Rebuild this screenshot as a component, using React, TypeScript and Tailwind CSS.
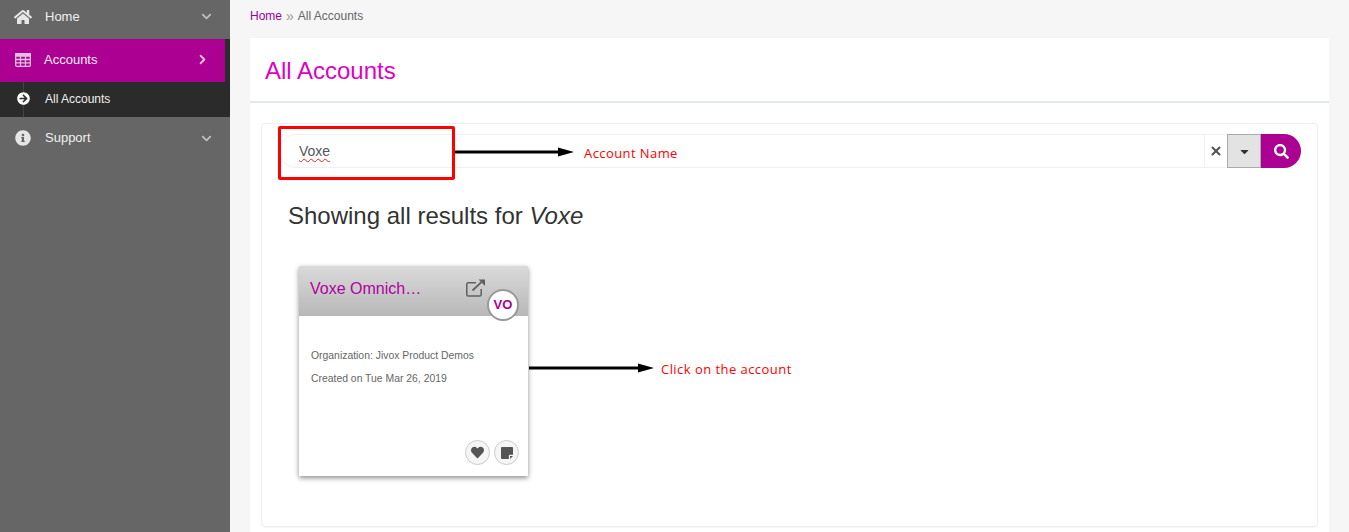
import React from 'react';
import { ChevronDown, ChevronRight, X } from 'lucide-react';
import { FaHome, FaInfoCircle, FaArrowCircleRight, FaSearch, FaHeart, FaCaretDown } from 'react-icons/fa';

const Arrow = ({ width }: { width: number }) => (
  <svg width={width} height="10" viewBox={`0 0 ${width} 10`} className="block">
    <rect x="0" y="3.5" width={width - 10} height="3" fill="#000" />
    <path d={`M${width - 16} 0.5 L${width} 5 L${width - 16} 9.5 Z`} fill="#000" />
  </svg>
);

const TableIcon = () => (
  <svg width="16" height="14" viewBox="0 0 16 14" fill="none" stroke="#e0c0dc" strokeWidth="1.3">
    <rect x="0.7" y="0.7" width="14.6" height="12.6" rx="1" />
    <rect x="0.7" y="0.7" width="14.6" height="2.4" fill="#e0c0dc" />
    <path d="M0.7 6.5H15.3M0.7 9.9H15.3M5.5 3V13.3M10.5 3V13.3" />
  </svg>
);

const ExternalIcon = () => (
  <svg width="20" height="18" viewBox="0 0 20 18" fill="none" stroke="#606060" strokeWidth="1.5" className="absolute left-[167px] top-[13px]">
    <path d="M15.2 10V15.5C15.2 16.3 14.6 17 13.8 17H2.2C1.4 17 0.8 16.3 0.8 15.5V5.2C0.8 4.4 1.4 3.8 2.2 3.8H10" />
    <path d="M6.5 11.5L17 1.6" strokeWidth="1.8" />
    <path d="M12.6 0.6H19V7Z" fill="#606060" stroke="none" />
  </svg>
);

const NoteIcon = () => (
  <svg width="12" height="12" viewBox="0 0 13 13">
    <path d="M1 0H12A1 1 0 0 1 13 1V8.5H9.5A1 1 0 0 0 8.5 9.5V13H1A1 1 0 0 1 0 12V1A1 1 0 0 1 1 0Z" fill="#555555" />
    <path d="M9.8 13V9.8H13Z" fill="#555555" />
  </svg>
);

const SideRow = ({ icon, label, className }: { icon: React.ReactNode; label: string; className: string }) => (
  <div className={`flex items-center text-[13px] text-[#f0f0f0] ${className}`}>
    <span className="flex w-[45px] justify-center pl-[1px] text-[#e6e6e6]">{icon}</span>
    <span className="flex-1 font-medium">{label}</span>
    <ChevronDown size={15} strokeWidth={3} className="mr-[16px] text-[#bdbdbd]" />
  </div>
);

export default function App() {
  return (
    <div className="relative flex h-[532px] w-[1349px] overflow-hidden bg-[#f6f6f6] font-['Liberation_Sans',Arial,sans-serif]">
      {/* Sidebar */}
      <aside className="h-full w-[230px] shrink-0 bg-[#666666]">
        <SideRow icon={<FaHome size={18} />} label="Home" className="h-[39px] pb-[6px]" />
        <div className="bg-[#2b2b2b] pr-[5px]">
          <div className="flex h-[43px] items-center bg-[#ab0091] pb-[2px] text-[13px] text-[#f0f0f0]">
            <span className="flex w-[44px] justify-center pl-[1px]"><TableIcon /></span>
            <span className="flex-1 font-medium">Accounts</span>
            <ChevronRight size={15} strokeWidth={3} className="mr-[15px] text-[#e0c0dc]" />
          </div>
        </div>
        <div className="relative flex h-[35px] items-center bg-[#2b2b2b] pb-[2px] text-[12px] text-[#f0f0f0]">
          <span className="absolute left-[23px] top-0 h-full w-px bg-[#444444]" />
          <span className="relative flex w-[45px] justify-center pl-[2px]">
            <span className="rounded-full bg-[#2b2b2b]"><FaArrowCircleRight size={13} className="text-white" /></span>
          </span>
          <span className="font-medium">All Accounts</span>
        </div>
        <SideRow icon={<FaInfoCircle size={16} />} label="Support" className="h-[40px] pt-[2px]" />
      </aside>

      {/* Main */}
      <main className="flex-1 pl-[20px] pr-[20px]">
        <nav className="flex h-[38px] items-center pb-[6px] text-[12px] text-[#666666]">
          <span className="text-[#990099]">Home</span>
          <span className="mx-[4px] text-[14px] leading-none text-[#999999]">»</span>
          <span>All Accounts</span>
        </nav>
        <div className="h-[494px] bg-white">
          <div className="flex h-[65px] items-center border-b-2 border-[#e3e8ee] pt-[3px] pl-[15px]">
            <h1 className="text-[24px] font-normal text-[#e000c0]">All Accounts</h1>
          </div>
          <div className="px-[11px] pt-[20px]">
            <section className="h-[404px] rounded-[4px] border border-[#eeeeee] bg-white pl-[17px] pt-[10px] shadow-[0_1px_1px_rgba(0,0,0,0.03)]">
              {/* Search bar */}
              <div className="flex h-[34px] w-[1022px] items-stretch rounded-l-[17px] rounded-r-[17px] border border-[#eef0f3] bg-white">
                <div className="flex flex-1 items-center pl-[19px] text-[14px] text-[#555555]">
                  <span className="underline decoration-wavy decoration-[#e82020] decoration-1 underline-offset-2">Voxe</span>
                </div>
                <button className="flex w-[23px] items-center justify-center border-l border-[#eef0f3] text-[#555555]">
                  <X size={14} strokeWidth={3.5} />
                </button>
                <button className="-my-px flex w-[34px] items-center justify-center border border-[#aaaaaa] bg-[#e3e3e3] text-[#333333]">
                  <FaCaretDown size={13} />
                </button>
                <button className="-my-px -mr-px flex w-[40px] items-center justify-center rounded-r-[17px] bg-[#ab0091] text-white">
                  <FaSearch size={15} />
                </button>
              </div>

              <h2 className="mt-[33px] pl-[9px] text-[24px] leading-[30px] font-normal text-[#333333]">
                Showing all results for <em>Voxe</em>
              </h2>

              {/* Account card */}
              <div className="relative ml-[20px] mt-[35px] h-[210px] w-[229px] bg-white shadow-[0_2px_5px_rgba(0,0,0,0.45)]">
                <div className="flex h-[50px] items-start bg-gradient-to-b from-[#dadada] to-[#b8b8b8] pl-[11px] pt-[13px]">
                  <span className="text-[16px] leading-[20px] text-[#b000a0]">Voxe Omnich…</span>
                  <ExternalIcon />
                </div>
                <span className="absolute left-[188px] top-[23px] flex h-[32px] w-[32px] items-center justify-center rounded-full border-2 border-[#999999] bg-white text-[13px] font-bold text-[#ab0091]">VO</span>
                <div className="pl-[12px] pt-[33px] text-[10.4px] text-[#666666]">
                  <p className="leading-[14px]">Organization: Jivox Product Demos</p>
                  <p className="mt-[9px] leading-[14px]">Created on Tue Mar 26, 2019</p>
                </div>
                <div className="absolute bottom-[11px] right-[9px] flex gap-[4px]">
                  <span className="flex h-[25px] w-[25px] items-center justify-center rounded-full border border-[#cccccc] bg-[#f5f5f5] text-[#555555]"><FaHeart size={13} /></span>
                  <span className="flex h-[25px] w-[25px] items-center justify-center rounded-full border border-[#cccccc] bg-[#f5f5f5]"><NoteIcon /></span>
                </div>
              </div>
            </section>
          </div>
        </div>
      </main>

      {/* Annotations drawn over the screenshot */}
      <div className="absolute left-[278px] top-[126px] h-[54px] w-[177px] rounded-[2px] border-[3px] border-[#ff0000]" />
      <div className="absolute left-[455px] top-[147px]"><Arrow width={119} /></div>
      <span className="absolute left-[584px] top-[145px] font-['Open_Sans',sans-serif] text-[13px] leading-[16px] tracking-[0.42px] text-[#ff0000]">Account Name</span>
      <div className="absolute left-[529px] top-[363px]"><Arrow width={125} /></div>
      <span className="absolute left-[661px] top-[361px] font-['Open_Sans',sans-serif] text-[13px] leading-[16px] tracking-[0.45px] text-[#ff0000]">Click on the account</span>
    </div>
  );
}
